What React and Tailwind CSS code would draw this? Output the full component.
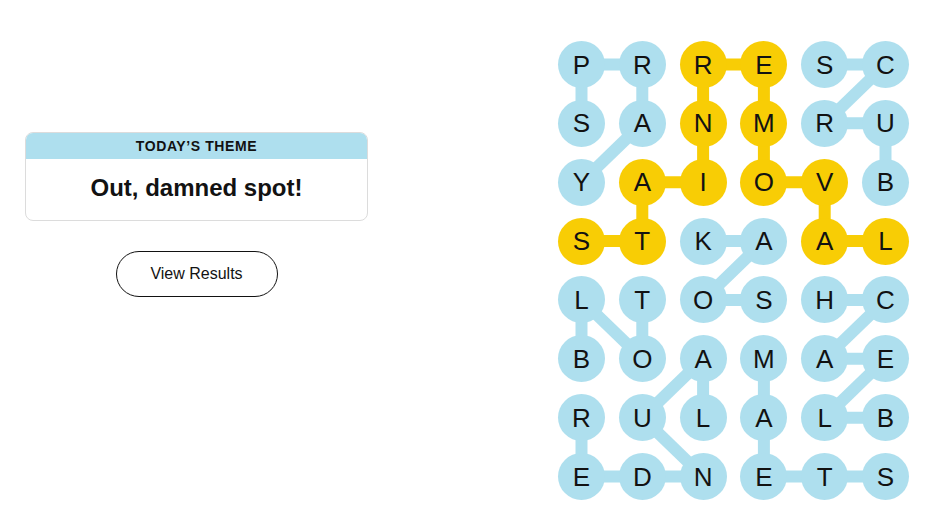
import React from 'react';

const BLUE = '#aedfee';
const YELLOW = '#f8cd05';

const GRID = [
  ['P', 'R', 'R', 'E', 'S', 'C'],
  ['S', 'A', 'N', 'M', 'R', 'U'],
  ['Y', 'A', 'I', 'O', 'V', 'B'],
  ['S', 'T', 'K', 'A', 'A', 'L'],
  ['L', 'T', 'O', 'S', 'H', 'C'],
  ['B', 'O', 'A', 'M', 'A', 'E'],
  ['R', 'U', 'L', 'A', 'L', 'B'],
  ['E', 'D', 'N', 'E', 'T', 'S'],
];

// spangram cells
const SPANGRAM = [
  [3, 0], [3, 1], [2, 1], [2, 2], [1, 2], [0, 2],
  [0, 3], [1, 3], [2, 3], [2, 4], [3, 4], [3, 5],
];

// found words, as paths of [row, col]
const WORDS = [
  [[1, 0], [0, 0], [0, 1], [1, 1], [2, 0]], // SPRAY
  [[0, 4], [0, 5], [1, 4], [1, 5], [2, 5]], // SCRUB
  [[4, 3], [4, 2], [3, 3], [3, 2]], // SOAK
  [[5, 0], [4, 0], [5, 1], [4, 1]], // BLOT
  [[6, 5], [6, 4], [5, 5], [5, 4], [4, 5], [4, 4]], // BLEACH
  [[6, 2], [5, 2], [6, 1], [7, 2], [7, 1], [7, 0], [6, 0]], // LAUNDER
  [[7, 5], [7, 4], [7, 3], [6, 3], [5, 3]], // STEAM
];

const isSpan = (r, c) => SPANGRAM.some(([a, b]) => a === r && b === c);

const cx = (c) => 23.5 + c * 60.8;
const cy = (r) => 23.5 + r * 58.86;

function Connectors({ path, color }) {
  return path.slice(1).map(([r, c], i) => {
    const [pr, pc] = path[i];
    return (
      <line
        key={i}
        x1={cx(pc)}
        y1={cy(pr)}
        x2={cx(c)}
        y2={cy(r)}
        stroke={color}
        strokeWidth="12"
      />
    );
  });
}

export default function App() {
  return (
    <div
      className="flex w-[926px] h-[521px] bg-white text-[#121212] overflow-hidden"
      style={{ fontFamily: '"Liberation Sans", Arial, sans-serif' }}
    >
      {/* left: theme + results */}
      <div className="w-[393px] shrink-0 pt-[132px] px-[25px] flex flex-col items-center">
        <div className="w-full rounded-lg border border-[#dcdcdc] overflow-hidden">
          <div className="h-[26px] bg-[#aedfee] flex items-center justify-center text-[14px] font-semibold tracking-[0.6px] uppercase">
            Today’s Theme
          </div>
          <div className="h-[61px] flex items-center justify-center text-[24px] font-bold pb-[3px]">
            Out, damned spot!
          </div>
        </div>
        <button className="mt-[30px] w-[162px] h-[46px] rounded-full border border-[#121212] text-[16px] bg-white">
          View Results
        </button>
      </div>

      {/* right: board */}
      <div className="ml-[165px] mt-[41px] relative w-[351px] h-[459px]">
        <svg className="absolute inset-0" width="351" height="459">
          {WORDS.map((w, i) => (
            <Connectors key={i} path={w} color={BLUE} />
          ))}
          <Connectors path={SPANGRAM} color={YELLOW} />
        </svg>
        <div className="relative grid grid-cols-[repeat(6,47px)] gap-x-[13.8px] gap-y-[11.86px]">
          {GRID.map((row, r) =>
            row.map((ch, c) => (
              <div
                key={`${r}-${c}`}
                className={`w-[47px] h-[47px] rounded-full flex items-center justify-center text-[26px] leading-none ${
                  isSpan(r, c) ? 'bg-[#f8cd05]' : 'bg-[#aedfee]'
                }`}
              >
                {ch}
              </div>
            ))
          )}
        </div>
      </div>
    </div>
  );
}
